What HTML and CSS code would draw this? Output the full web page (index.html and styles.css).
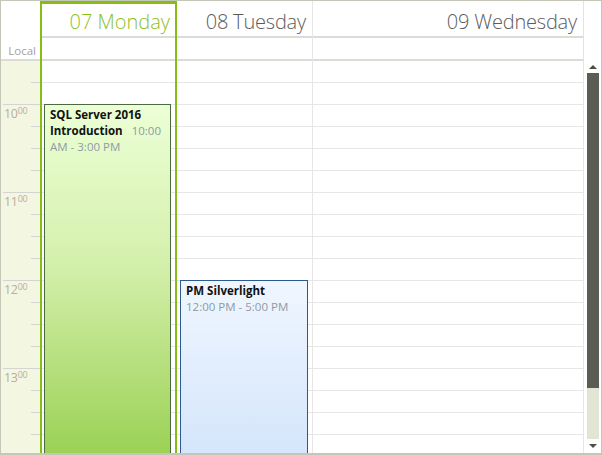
FILE: index.html
```html
<!DOCTYPE html>
<html>
<head>
<meta charset="utf-8">
<link rel="stylesheet" href="styles.css">
</head>
<body>
<div class="scheduler">
  <div class="head">
    <div class="hcell-time"><span class="local">Local</span></div>
    <div class="hday today">
      <div class="hname">07 Monday</div>
      <div class="hallday"></div>
    </div>
    <div class="hday">
      <div class="hname">08 Tuesday</div>
      <div class="hallday"></div>
    </div>
    <div class="hday last">
      <div class="hname">09 Wednesday</div>
      <div class="hallday"></div>
    </div>
    <div class="hscroll"></div>
  </div>
  <div class="body">
    <div class="timecol">
      <div class="slot tick"></div>
      <div class="slot hour"></div>
      <div class="slot tick"><span class="hl">10<sup>00</sup></span></div>
      <div class="slot tick"></div>
      <div class="slot tick"></div>
      <div class="slot hour"></div>
      <div class="slot tick"><span class="hl">11<sup>00</sup></span></div>
      <div class="slot tick"></div>
      <div class="slot tick"></div>
      <div class="slot hour"></div>
      <div class="slot tick"><span class="hl">12<sup>00</sup></span></div>
      <div class="slot tick"></div>
      <div class="slot tick"></div>
      <div class="slot hour"></div>
      <div class="slot tick"><span class="hl">13<sup>00</sup></span></div>
      <div class="slot tick"></div>
      <div class="slot tick"></div>
      <div class="slot hour"></div>
    </div>
    <div class="day today">
      <div class="appt green">
        <span class="title">SQL Server 2016 Introduction</span>
        <span class="time">10:00 AM - 3:00 PM</span>
      </div>
    </div>
    <div class="day">
      <div class="appt blue">
        <span class="title">PM Silverlight</span>
        <span class="time">12:00 PM - 5:00 PM</span>
      </div>
    </div>
    <div class="day last"></div>
    <div class="vscroll">
      <div class="arrow up"></div>
      <div class="track">
        <div class="thumb"></div>
      </div>
      <div class="arrow down"></div>
    </div>
  </div>
</div>
</body>
</html>
```

FILE: styles.css
```css
* { box-sizing: border-box; }
html, body { margin: 0; padding: 0; background: #fff; }
body { font-family: "Open Sans", "Noto Sans", sans-serif; }

.scheduler {
  width: 602px;
  height: 455px;
  border: 1px solid #c4c6b8;
  border-bottom-width: 2px;
  display: flex;
  flex-direction: column;
  overflow: hidden;
  background: #fff;
}

.head {
  display: grid;
  grid-template-columns: 39px 137px 136px 271px 17px;
  height: 60px;
  flex: none;
}
.hcell-time {
  border-bottom: 2px solid #dcdcd6;
  display: flex;
  align-items: flex-end;
  justify-content: flex-end;
  padding: 0 4px 1px 0;
}
.local {
  font-size: 11.5px;
  color: #aa9f98;
  line-height: 15px;
}
.hday {
  display: flex;
  flex-direction: column;
  border-right: 1px solid #e6e6e6;
}
.hday.last { border-right: 1px solid #e3e3e3; }
.hday.today {
  border-left: 2px solid #86bd13;
  border-right: 2px solid #86bd13;
  border-top: 3px solid #86bd13;
}
.hname {
  height: 37px;
  border-bottom: 2px solid #dcdcd6;
  text-align: right;
  font-size: 20px;
  font-weight: 300;
  color: #5c5c5c;
  line-height: 27px;
  padding: 7px 6px 0 0;
  letter-spacing: -0.2px;
}
.hday.today .hname {
  height: 34px;
  padding-top: 4px;
  padding-right: 5px;
  color: #8cc21c;
  letter-spacing: 0;
}
.hallday {
  flex: 1;
  border-bottom: 2px solid #dcdcd6;
}
.hscroll { background: #fff; }

.body {
  flex: 1;
  display: grid;
  grid-template-columns: 39px 137px 136px 271px 17px;
  min-height: 0;
}

.timecol {
  background: #f3f7e1;
  display: flex;
  flex-direction: column;
  overflow: hidden;
}
.slot {
  height: 22px;
  flex: none;
  background-repeat: no-repeat;
  background-position: right bottom;
}
.slot.tick {
  background-image: linear-gradient(#d4d4d0, #d4d4d0);
  background-size: 9px 1px;
}
.slot.hour {
  background-image: linear-gradient(#d4d4d0, #d4d4d0);
  background-size: 37px 1px;
}
.hl {
  display: block;
  padding: 2px 0 0 3px;
  font-size: 12.5px;
  line-height: 14px;
  color: #b9ad9f;
  letter-spacing: -0.3px;
}
.hl sup {
  font-size: 9px;
  vertical-align: 4px;
  line-height: 0;
}

.day {
  position: relative;
  overflow: hidden;
  border-right: 1px solid #e6e6e6;
  background-image: repeating-linear-gradient(to bottom, transparent 0, transparent 21px, #e6e6e6 21px, #e6e6e6 22px);
}
.day.today {
  border-left: 2px solid #86bd13;
  border-right: 2px solid #86bd13;
}

.appt {
  position: absolute;
  font-size: 11.5px;
  line-height: 16px;
  padding: 2px 4px 0 5px;
}
.appt .title {
  font-weight: 700;
  color: #111;
  margin-right: 6px;
}
.appt .time {
  color: #8e9aa4;
}
.appt.green {
  top: 43px;
  left: 2px;
  width: 127px;
  bottom: -2px;
  border: 1px solid #4b6a40;
  background: linear-gradient(to bottom, #ecffd6 0%, #d4f0ac 45%, #9bd155 100%);
}
.appt.blue {
  top: 219px;
  left: 3px;
  width: 128px;
  bottom: -2px;
  border: 1px solid #2b5a8e;
  background: linear-gradient(to bottom, #eff6ff 0%, #d5e5fb 100%);
}

.vscroll {
  display: flex;
  flex-direction: column;
  align-items: center;
  padding: 2px 2px 2px 3px;
  background: #fff;
}
.arrow {
  width: 0;
  height: 0;
  border-left: 4px solid transparent;
  border-right: 4px solid transparent;
  flex: none;
}
.arrow.up {
  border-bottom: 4px solid #4c4d45;
  margin: 2px 0 4px;
}
.arrow.down {
  border-top: 4px solid #4c4d45;
  margin: 5px 0 3px;
}
.track {
  flex: 1;
  width: 12px;
  background: #e2e5d4;
  display: flex;
  flex-direction: column;
}
.thumb {
  height: 315px;
  background: #5b5c54;
}
```
